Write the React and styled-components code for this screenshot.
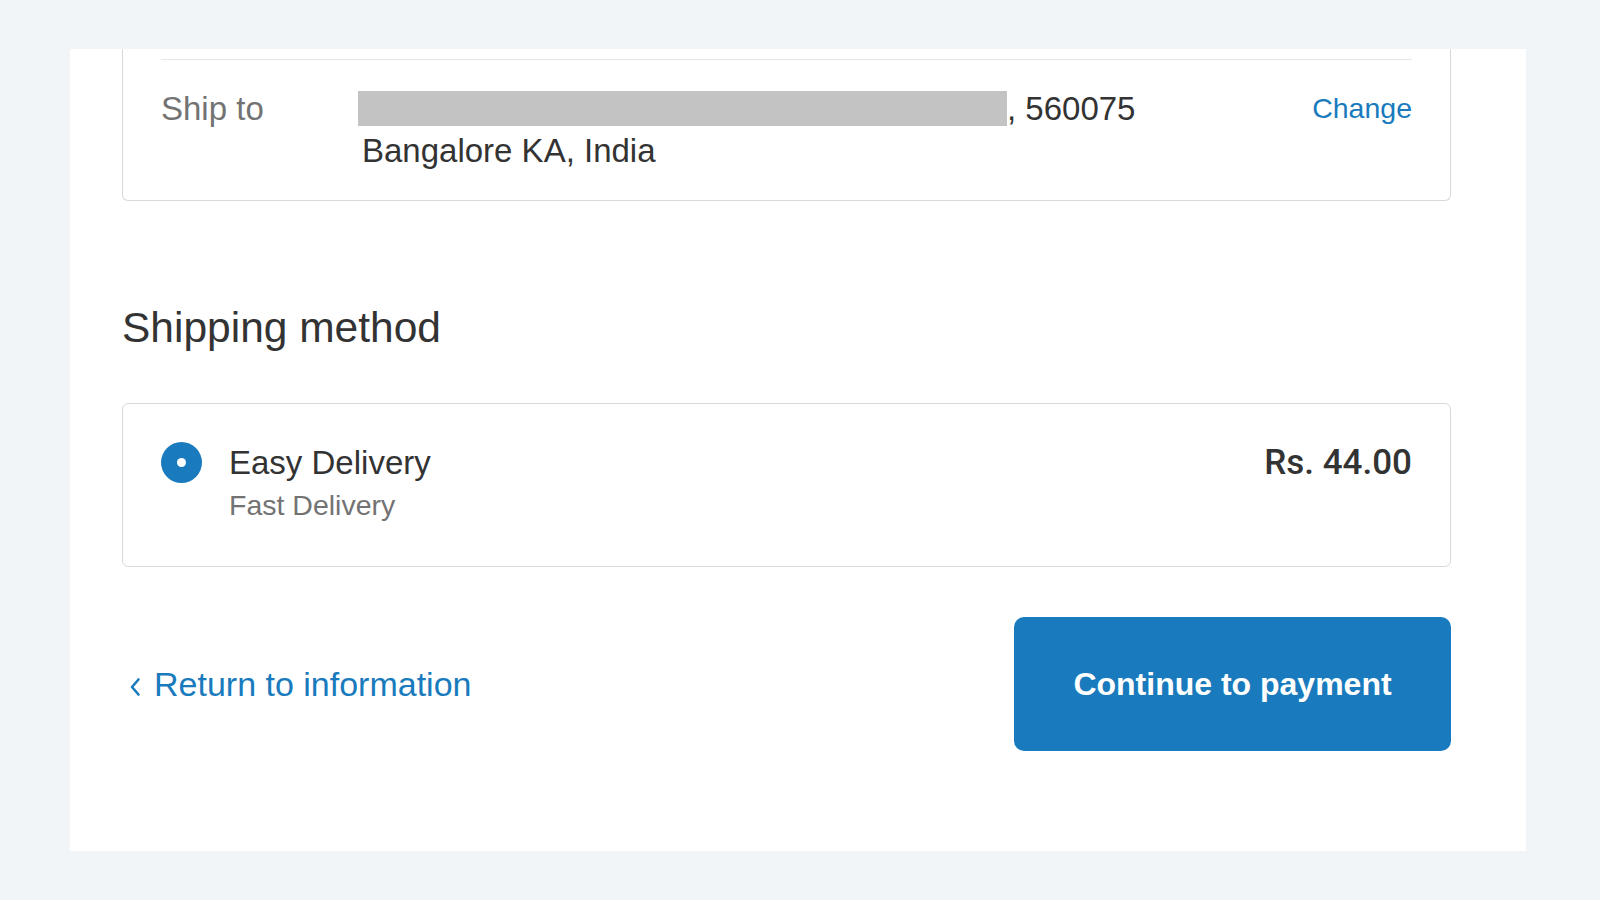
import styled, { createGlobalStyle } from "styled-components";

const GlobalStyle = createGlobalStyle`
	* {
		box-sizing: border-box;
	}
	body {
		margin: 0;
		background: #f1f5f8;
		font-family: "Liberation Sans", Arial, Helvetica, sans-serif;
		color: #333333;
	}
`;

export default function App() {
	return (
		<>
			<GlobalStyle />
			<Page>
				<Panel>
					{/* ---------- review block (top is scrolled off) ---------- */}
					<ReviewCard>
						<ReviewRow>
							<RowLabel>Ship to</RowLabel>
							<Address>
								<AddressLine>
									<Redacted />, 560075
								</AddressLine>
								<AddressLine indent>Bangalore KA, India</AddressLine>
							</Address>
							<ChangeLink href="#">Change</ChangeLink>
						</ReviewRow>
					</ReviewCard>

					{/* ---------- shipping method ---------- */}
					<SectionTitle>Shipping method</SectionTitle>
					<MethodCard>
						<Radio />
						<MethodText>
							<MethodName>Easy Delivery</MethodName>
							<MethodNote>Fast Delivery</MethodNote>
						</MethodText>
						<MethodPrice>Rs. 44.00</MethodPrice>
					</MethodCard>

					{/* ---------- footer ---------- */}
					<Footer>
						<BackLink href="#">
							<Chevron width="14" height="20" viewBox="0 0 14 20" fill="none">
								<path
									d="M10.5 2.5L4 10l6.5 7.5"
									stroke="#197bbd"
									strokeWidth="2.6"
									strokeLinecap="round"
									strokeLinejoin="round"
								/>
							</Chevron>
							Return to information
						</BackLink>
						<PrimaryButton>Continue to payment</PrimaryButton>
					</Footer>
				</Panel>
			</Page>
		</>
	);
}

const Page = styled.div`
	padding: 49px 74px 50px 70px;
`;

const Panel = styled.main`
	width: 1456px;
	background: #ffffff;
	padding: 0 75px 100px 52px;
`;

// ---------------------- Review ---------------------- //

const ReviewCard = styled.section`
	border: 1px solid #d9d9d9;
	border-top: none;
	border-radius: 0 0 6px 6px;
	padding-top: 10px;
`;

const ReviewRow = styled.div`
	margin: 0 38px;
	padding: 28px 0 28px;
	border-top: 1px solid #e6e6e6;
	display: flex;
	align-items: flex-start;
`;

const RowLabel = styled.div`
	width: 197px;
	flex: none;
	font-size: 33px;
	line-height: 42px;
	color: #737373;
`;

const Address = styled.div`
	flex: 1;
	font-size: 33px;
	line-height: 42px;
	color: #333333;
`;

const AddressLine = styled.div`
	white-space: nowrap;
	padding-left: ${(props) => (props.indent ? "4px" : "0")};
`;

const Redacted = styled.span`
	display: inline-block;
	width: 649px;
	height: 35px;
	background: #c3c3c3;
	vertical-align: -6px;
`;

const ChangeLink = styled.a`
	font-size: 28.5px;
	line-height: 40px;
	color: #197bbd;
	text-decoration: none;
`;

// ---------------------- Shipping ---------------------- //

const SectionTitle = styled.h2`
	margin: 99px 0 48px;
	font-size: 42.5px;
	line-height: 55px;
	font-weight: 400;
	color: #333333;
`;

const MethodCard = styled.div`
	border: 1px solid #d9d9d9;
	border-radius: 6px;
	padding: 38px 38px 40px;
	display: flex;
	align-items: flex-start;
`;

const Radio = styled.span`
	width: 41px;
	height: 41px;
	flex: none;
	border-radius: 50%;
	background: #197bbd;
	display: flex;
	align-items: center;
	justify-content: center;

	&::after {
		content: "";
		width: 9px;
		height: 9px;
		border-radius: 50%;
		background: #ffffff;
	}
`;

const MethodText = styled.div`
	flex: 1;
	margin-left: 27px;
`;

const MethodName = styled.div`
	font-size: 33px;
	line-height: 42px;
	color: #333333;
`;

const MethodNote = styled.div`
	font-size: 28.5px;
	line-height: 42px;
	color: #737373;
`;

const MethodPrice = styled.div`
	font-family: Roboto, "Liberation Sans", Arial, sans-serif;
	font-size: 35px;
	line-height: 42px;
	font-weight: 500;
	color: #333333;
`;

// ---------------------- Footer ---------------------- //

const Footer = styled.div`
	margin-top: 50px;
	display: flex;
	align-items: center;
	justify-content: space-between;
`;

const BackLink = styled.a`
	display: flex;
	align-items: center;
	gap: 12px;
	font-size: 34px;
	line-height: 42px;
	color: #197bbd;
	text-decoration: none;
	padding-left: 6px;
`;

const Chevron = styled.svg`
	flex: none;
	margin-top: 6px;
`;

const PrimaryButton = styled.button`
	width: 437px;
	height: 134px;
	border: none;
	border-radius: 10px;
	background: #197bbd;
	color: #ffffff;
	font-family: "Liberation Sans", Arial, Helvetica, sans-serif;
	font-size: 32px;
	font-weight: 700;
	cursor: pointer;
`;
